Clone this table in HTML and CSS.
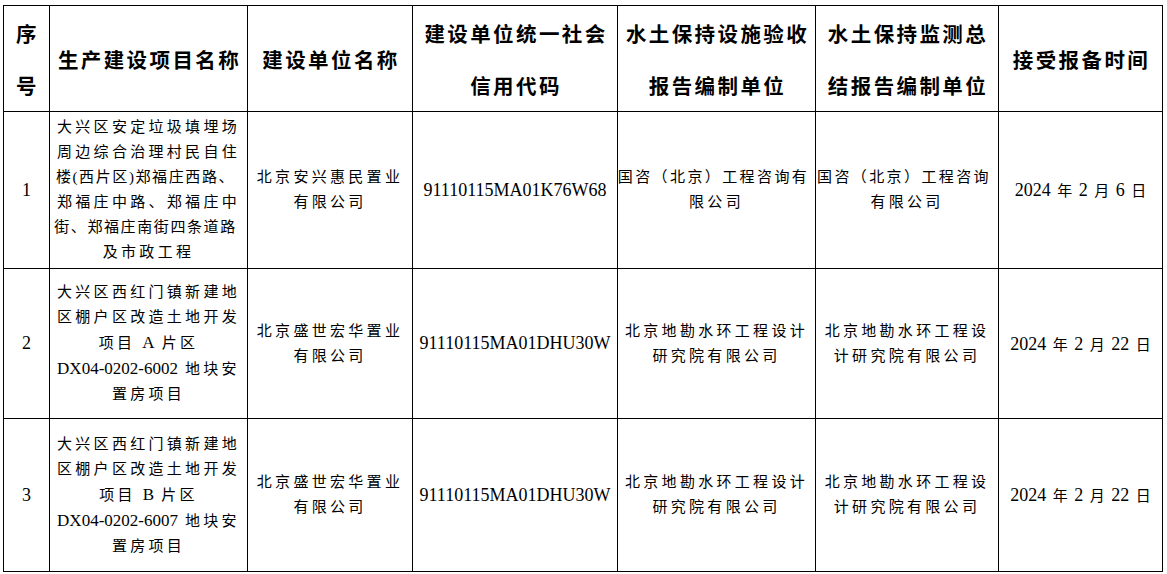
FILE: index.html
```html
<!DOCTYPE html>
<html lang="zh-CN">
<head>
<meta charset="utf-8">
<title>水土保持设施验收报备</title>
<link rel="stylesheet" href="styles.css">
</head>
<body>
<table class="grid">
  <colgroup>
    <col class="c-no">
    <col class="c-proj">
    <col class="c-unit">
    <col class="c-code">
    <col class="c-rep">
    <col class="c-mon">
    <col class="c-date">
  </colgroup>
  <thead>
    <tr class="head">
      <th>序号</th>
      <th>生产建设项目名称</th>
      <th>建设单位名称</th>
      <th>建设单位统一社会<br>信用代码</th>
      <th>水土保持设施验收<br>报告编制单位</th>
      <th>水土保持监测总<br>结报告编制单位</th>
      <th>接受报备时间</th>
    </tr>
  </thead>
  <tbody>
    <tr class="r1">
      <td class="num">1</td>
      <td class="cn">大兴区安定垃圾填埋场<br>周边综合治理村民自住<br><span class="tight">楼(西片区)郑福庄西路、</span><br>郑福庄中路、郑福庄中<br><span class="tight">街、郑福庄南街四条道路</span><br>及市政工程</td>
      <td class="cn">北京安兴惠民置业<br>有限公司</td>
      <td class="num">91110115MA01K76W68</td>
      <td class="cn"><span class="tight2">国咨（北京）工程咨询有</span><br>限公司</td>
      <td class="cn"><span class="tight2">国咨（北京）工程咨询</span><br>有限公司</td>
      <td class="date">2024 <span class="cj">年</span> 2 <span class="cj">月</span> 6 <span class="cj">日</span></td>
    </tr>
    <tr class="r2">
      <td class="num">2</td>
      <td class="cn">大兴区西红门镇新建地<br>区棚户区改造土地开发<br>项目 <span class="lat">A</span> 片区<br><span class="lat">DX04-0202-6002</span> 地块安<br>置房项目</td>
      <td class="cn">北京盛世宏华置业<br>有限公司</td>
      <td class="num">91110115MA01DHU30W</td>
      <td class="cn">北京地勘水环工程设计<br>研究院有限公司</td>
      <td class="cn">北京地勘水环工程设<br>计研究院有限公司</td>
      <td class="date">2024 <span class="cj">年</span> 2 <span class="cj">月</span> 22 <span class="cj">日</span></td>
    </tr>
    <tr class="r3">
      <td class="num">3</td>
      <td class="cn">大兴区西红门镇新建地<br>区棚户区改造土地开发<br>项目 <span class="lat">B</span> 片区<br><span class="lat">DX04-0202-6007</span> 地块安<br>置房项目</td>
      <td class="cn">北京盛世宏华置业<br>有限公司</td>
      <td class="num">91110115MA01DHU30W</td>
      <td class="cn">北京地勘水环工程设计<br>研究院有限公司</td>
      <td class="cn">北京地勘水环工程设<br>计研究院有限公司</td>
      <td class="date">2024 <span class="cj">年</span> 2 <span class="cj">月</span> 22 <span class="cj">日</span></td>
    </tr>
  </tbody>
</table>
</body>
</html>
```
FILE: styles.css
```css
html, body {
  margin: 0;
  padding: 0;
  background: #fff;
}
body {
  padding: 5px 0 0 3px;
  color: #000;
  font-family: "Liberation Serif", "Noto Sans CJK SC", serif;
}
.grid {
  border-collapse: collapse;
  table-layout: fixed;
  width: 1160px;
}
.c-no { width: 46px; }
.c-proj { width: 198px; }
.c-unit { width: 165px; }
.c-code { width: 205px; }
.c-rep { width: 198px; }
.c-mon { width: 183px; }
.c-date { width: 164px; }

.grid th, .grid td {
  border: 1px solid #000;
  padding: 0;
  text-align: center;
  vertical-align: middle;
  overflow: visible;
  white-space: nowrap;
}
.head {
  height: 106px;
}
.grid th {
  font-family: "Noto Sans CJK SC", sans-serif;
  font-weight: 700;
  font-size: 20.5px;
  line-height: 52px;
  letter-spacing: 2.4px;
  white-space: normal;
  padding-left: 2px;
}
.r1 { height: 157px; }
.r2 { height: 150px; }
.r3 { height: 153px; }

.cn {
  font-family: "Liberation Serif", "Noto Sans CJK SC", serif;
  font-size: 15px;
  line-height: 25px;
  letter-spacing: 3.3px;
  padding-left: 3px;
}
.cn .tight { letter-spacing: 1.6px; margin-left: -6px; }
.cn .tight2 { letter-spacing: 2.4px; margin-left: -6px; }
.cn .lat {
  font-family: "Liberation Serif", serif;
  font-size: 17px;
  letter-spacing: 0;
}
.num {
  font-family: "Liberation Serif", serif;
  font-size: 18px;
}
.date {
  font-family: "Liberation Serif", "Noto Sans CJK SC", serif;
  font-size: 18px;
  word-spacing: 2px;
  padding-right: 4px;
}
.date .cj {
  font-family: "Noto Sans CJK SC", sans-serif;
  font-size: 15px;
}
```
